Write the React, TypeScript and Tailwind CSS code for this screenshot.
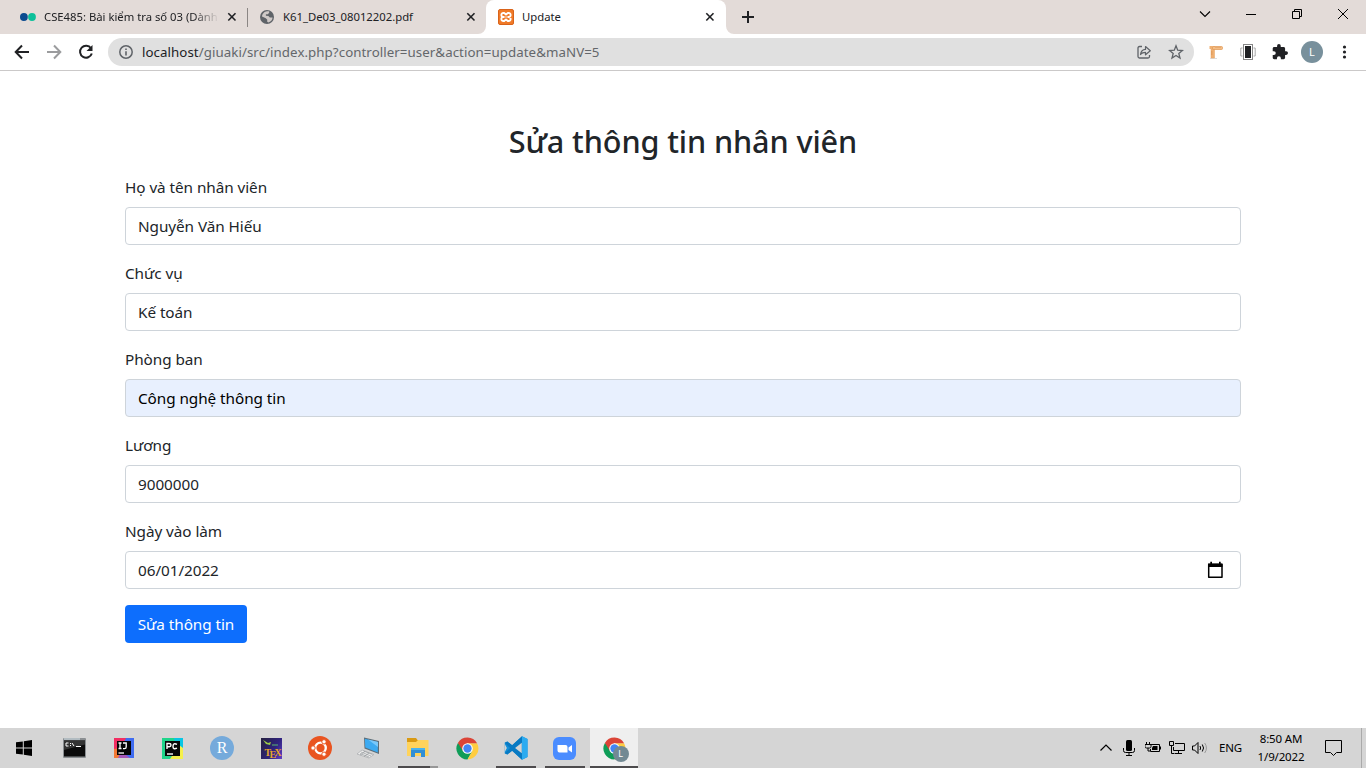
import React from "react";

type P = { children?: React.ReactNode; className?: string };

const Svg = ({ w, h = w, vb, children, className = "" }: { w: number; h?: number; vb?: string } & P) => (
  <svg width={w} height={h} viewBox={vb ?? `0 0 ${w} ${h}`} fill="none" className={`block shrink-0 ${className}`}>
    {children}
  </svg>
);

const TabClose = () => (
  <Svg w={10}>
    <path d="M1.3 1.3l7.2 7.2M8.5 1.3L1.3 8.5" stroke="#202124" strokeWidth="1.6" />
  </Svg>
);

function TabStrip() {
  return (
    <div className="flex h-[34px] bg-[#e3dbd8] text-[11.3px] text-[#202124]">
      <div className="flex w-[247px] items-center pl-5">
        <Svg w={16}>
          <circle cx="3.9" cy="8" r="3.9" fill="#0a4a8f" />
          <circle cx="12" cy="8" r="3.9" fill="#0cc09a" />
        </Svg>
        <span className="ml-2 w-[175px] whitespace-nowrap tracking-[-0.01px] [mask-image:linear-gradient(to_right,black_85%,transparent)]">
          CSE485: Bài kiểm tra số 03 (Dành
        </span>
        <span className="ml-2"><TabClose /></span>
      </div>
      <div className="mt-2 h-[19px] w-px bg-[#8b8684]" />
      <div className="flex w-[238px] items-center pl-3">
        <Svg w={14}>
          <circle cx="7" cy="7" r="7" fill="#5f6368" />
          <path d="M7 1.3h2.2v1.5L7.8 4.2H5.9v1.6l2.5.1 1.4 1.6h2.8c0 2.3-2 4.6-4.3 5l-1.2-1 .2-1.8-1.5-1.5L2 6.4c.2-2.3 2.4-4.9 5-5.1z" fill="#e3dbd8" opacity=".85" />
        </Svg>
        <span className="ml-[9px] w-[183px]">K61_De03_08012202.pdf</span>
        <TabClose />
      </div>
      <div className="relative flex w-[240px] items-center rounded-t-lg bg-white pl-3">
        <Svg w={8} className="absolute bottom-0 -left-2"><path d="M8 0v8H0A8 8 0 0 0 8 0z" fill="#fff" /></Svg>
        <Svg w={8} className="absolute -right-2 bottom-0"><path d="M0 0v8h8A8 8 0 0 1 0 0z" fill="#fff" /></Svg>
        <Svg w={16}>
          <rect x=".5" y=".5" width="15" height="15" rx="1.5" fill="#f07a28" stroke="#d9631a" />
          <path d="M6 8H5Q3.300 7.800 3.300 6T5 4h1.200L8 5.600 9.800 4H11q1.700.2 1.700 2T11 8h-1M6 8H5q-1.700.2-1.700 2T5 12h1.200L8 10.400 9.800 12H11q1.700-.2 1.700-2T11 8M5.500 8h5" stroke="#fff" strokeWidth="1.900" strokeLinejoin="round" />
          <path d="M6.300 8h3.400" stroke="#f07a28" strokeWidth="1.300" />
        </Svg>
        <span className="ml-2 w-[183px]">Update</span>
        <TabClose />
      </div>
      <div className="flex flex-1 items-center pl-4">
        <Svg w={12}><path d="M6 0v12M0 6h12" stroke="#202124" strokeWidth="2" /></Svg>
      </div>
      <div className="flex h-7 text-black">
        <div className="flex w-[46px] items-center justify-center"><Svg w={12}><path d="M1 3.500l5 5 5-5" stroke="currentColor" strokeWidth="1.1" /></Svg></div>
        <div className="flex w-[46px] items-center justify-center"><Svg w={10}><path d="M0 5.500h10" stroke="#000" /></Svg></div>
        <div className="flex w-[46px] items-center justify-center"><Svg w={10}><path d="M.5 2.500h7v7h-7zM2.500 2.500v-2h7v7h-2" stroke="#000" /></Svg></div>
        <div className="flex w-[46px] items-center justify-center"><Svg w={10}><path d="M0 0l10 10M10 0L0 10" stroke="#000" /></Svg></div>
      </div>
    </div>
  );
}

function Toolbar() {
  return (
    <div className="flex h-[37px] items-center border-b border-[#cbc9c9] bg-white pl-[14px]">
      <Svg w={16}><path d="M15 8H2M8 1.500L1.700 8 8 14.500" stroke="#202124" strokeWidth="2" /></Svg>
      <Svg w={16} className="ml-4"><path d="M1 8h13M8 1.500L14.300 8 8 14.500" stroke="#9b9c9e" strokeWidth="2" /></Svg>
      <Svg w={16} className="ml-4">
        <path d="M13 4.300A6 6 0 1 0 13.800 9.500" stroke="#202124" strokeWidth="2" />
        <path d="M14.500 1v6h-6z" fill="#202124" />
      </Svg>
      <div className="ml-[14px] flex h-7 w-[1086px] items-center rounded-full bg-[#e0e0e0] pl-[11px]">
        <Svg w={14}>
          <circle cx="7" cy="7" r="6.200" stroke="#5f6368" strokeWidth="1.500" />
          <path d="M7 6.200v4.300M7 3.500v1.500" stroke="#5f6368" strokeWidth="1.600" />
        </Svg>
        <span className="ml-[9px] flex-1 pt-px text-[13.3px] tracking-[0.06px] text-[#64676b]">
          <span className="text-[#202124]">localhost</span>/giuaki/src/index.php?controller=user&amp;action=update&amp;maNV=5
        </span>
        <Svg w={16} className="mr-4">
          <path d="M6 2.500H3.500Q2 2.500 2 4v8.500Q2 14 3.500 14h8.500q1.500 0 1.500-1.500V11" stroke="#5f6368" strokeWidth="1.300" />
          <path d="M4.500 10.500c.5-3.500 2.300-5 5-5.100V2.500l4.800 4.300-4.800 4V8.300c-2.300 0-3.800.6-5 2.200z" stroke="#5f6368" strokeWidth="1.200" strokeLinejoin="round" />
        </Svg>
        <Svg w={16} className="mr-[10px]">
          <path d="M8 1.800l1.700 4.400 4.700.3-3.600 3 1.200 4.600L8 11.500l-4 2.600 1.200-4.600-3.600-3 4.700-.3z" stroke="#5f6368" strokeWidth="1.300" />
        </Svg>
      </div>
      <Svg w={16} className="ml-[14px]">
        <path d="M2 14.500h7" stroke="#ddd" />
        <path d="M3 2.500h3.500v11.500H3z" fill="#efb071" stroke="#e5a262" strokeWidth=".5" />
        <path d="M1.500 2h3v3h-3z" fill="#f0b173" />
        <rect x="4.500" y="2.500" width="10" height="3" rx="1" fill="#f4bd85" stroke="#df9651" strokeWidth=".7" />
        <path d="M8 3v1M10 3v1M12 3v1M3 8h1.500M3 10h1.500" stroke="#cf803c" strokeWidth=".6" />
      </Svg>
      <Svg w={16} className="ml-4">
        <rect x="3.500" y=".5" width="9" height="15" stroke="#888" />
        <rect x="5" y="2" width="6" height="12" fill="#202124" />
        <path d="M2.500 4H.8v8h1.700M13.500 4h1.700v8h-1.700" stroke="#aaa" />
      </Svg>
      <Svg w={16} vb="1 1 22 22" className="ml-4">
        <path fill="#202124" d="M20.500 11H19V7c0-1.100-.9-2-2-2h-4V3.500a2.500 2.500 0 0 0-5 0V5H4c-1.100 0-2 .9-2 2v3.800h1.500a2.700 2.700 0 0 1 0 5.400H2V20c0 1.100.9 2 2 2h3.800v-1.500a2.700 2.700 0 0 1 5.400 0V22H17c1.100 0 2-.9 2-2v-4h1.500a2.500 2.500 0 0 0 0-5z" />
      </Svg>
      <div className="ml-[13px] flex size-[22px] items-center justify-center rounded-full bg-[#78909c] text-[11px] text-white">L</div>
      <Svg w={16} className="ml-[13px]">
        <circle cx="8.500" cy="3" r="1.600" fill="#202124" /><circle cx="8.500" cy="8" r="1.600" fill="#202124" /><circle cx="8.500" cy="13" r="1.600" fill="#202124" />
      </Svg>
    </div>
  );
}

const fields = [
  { label: "Họ và tên nhân viên", value: "Nguyễn Văn Hiếu" },
  { label: "Chức vụ", value: "Kế toán" },
  { label: "Phòng ban", value: "Công nghệ thông tin", auto: true },
  { label: "Lương", value: "9000000" },
  { label: "Ngày vào làm", value: "06/01/2022", date: true },
];

function Form() {
  return (
    <main className="h-[657px] bg-white px-[125px] pt-[51px] text-[15.3px] tracking-[-0.06px] text-[#212529]">
      <h2 className="mb-[7px] h-[46px] text-center text-[30.6px] leading-[38px] font-medium tracking-[-0.1px]">Sửa thông tin nhân viên</h2>
      {fields.map((f) => (
        <div key={f.label} className="mb-4 h-[70px]">
          <label className="mb-2 block h-6 leading-6">{f.label}</label>
          <div className={`flex h-[38px] items-center rounded border border-[#ced4da] px-3 ${f.auto ? "bg-[#e8f0fe] text-black" : "bg-white"}`}>
            <input className="min-w-0 flex-1 bg-transparent outline-none" defaultValue={f.value} />
            {f.date && (
              <Svg w={16} h={18} className="mr-[5px]">
                <path d="M1.700 3.500h13.300v12.700H1.700z" stroke="#000" strokeWidth="1.500" strokeLinejoin="round" />
                <path d="M1 2.500h14.500V6H1zM3.300.8H5V3H3.300zM12 .8h1.700V3H12z" fill="#000" />
              </Svg>
            )}
          </div>
        </div>
      ))}
      <button className="block h-[38px] w-[122px] rounded bg-[#0d6efd] tracking-[-0.06px] text-white">Sửa thông tin</button>
    </main>
  );
}

const Chrome = () => (
  <Svg w={23} vb="0 0 48 48">
    <path d="M24 24L4 12.500A23 23 0 0 0 24 47l9.500-17z" fill="#0f9d58" />
    <path d="M24 13h20a23 23 0 0 1-20 34l10-18z" fill="#ffcd40" />
    <path d="M24 13h20A23 23 0 0 0 4 12.500L14.500 29z" fill="#db4437" />
    <circle cx="24" cy="24" r="11" fill="#fff" /><circle cx="24" cy="24" r="8.700" fill="#4285f4" />
  </Svg>
);

const apps: { icon: React.ReactNode; state?: "open" | "multi" | "active" }[] = [
  { icon: <Svg w={23} h={20} className="mr-px">
    <rect width="23" height="20" rx="1" fill="#8b8f92" /><path d="M1 2.500h21V18.500H1z" fill="#0b0b0b" /><path d="M1 2.500h21v4L1 12z" fill="#333" />
    <path d="M1 1h16" stroke="#d8e8f0" /><path d="M5.500 5H3v3h2.500M7.500 5v1M7.500 7v1M9 5l2 3M13 8.500h5" stroke="#fff" strokeWidth="1" />
  </Svg> },
  { icon: <Svg w={20}>
    <path d="M0 0h20v20H0z" fill="#3f6cf0" /><path d="M0 0h12l-6 12L0 12z" fill="#f22d62" /><path d="M0 11l6-1 4 10H0z" fill="#f37a35" /><path d="M4 20l3-7 9 7z" fill="#a558b8" />
    <path d="M3 3h14v14H3z" fill="#050505" />
    <path d="M4.500 5h3M6 5v5.500M4.500 10.500h3M9 5h3.200v4q0 1.700-1.700 1.700H9" stroke="#fff" strokeWidth="1.300" /><path d="M4.500 15h5.500" stroke="#fff" strokeWidth="1.300" />
  </Svg> },
  { icon: <Svg w={21} className="mr-px">
    <path d="M0 0h21v21H0z" fill="#20d58b" /><path d="M12 0h9v12l-7-2z" fill="#08c6e4" /><path d="M21 10v11H8l9-14z" fill="#f5f04b" /><path d="M3 3h15v15H3z" fill="#080808" />
    <path d="M5 11V5.500h2.200q1.800 0 1.800 1.600T7.200 8.800H5M15 6.300q-3.800-1.800-4 1.900t4 2" stroke="#fff" strokeWidth="1.400" /><path d="M5 16h6" stroke="#fff" strokeWidth="1.400" />
  </Svg> },
  { icon: <div className="flex size-6 items-center justify-center rounded-full bg-[#75aadb] font-['Liberation_Serif',serif] text-[16px] leading-none text-white">R</div> },
  { icon: <div className="relative h-[21px] w-[21px] bg-[linear-gradient(120deg,#25203f,#2f237e_60%,#6140c4)] font-['Liberation_Serif',serif] text-[10px] leading-none font-bold text-[#e5a52b]">
    <Svg w={21} h={10} className="absolute top-0 left-0"><path d="M2 2l5 3 3-1-1 3-4-1z" fill="#9ccb47" /><path d="M11 7h6" stroke="#59b774" /></Svg>
    <span className="absolute top-[10px] left-1">T</span><span className="absolute top-3 left-[9px]">E</span><span className="absolute top-[10px] left-[14px]">X</span>
  </div> },
  { icon: <Svg w={24}>
    <circle cx="12" cy="12" r="12" fill="#e95420" /><circle cx="12.500" cy="12" r="5.300" stroke="#fff" strokeWidth="2.300" />
    {[[5, 12], [16, 5.8], [16, 18.2]].map(([x, y]) => <circle key={y} cx={x} cy={y} r="2.200" fill="#fff" stroke="#e95420" strokeWidth="1" />)}
  </Svg> },
  { icon: <Svg w={24} className="mr-[2px]">
    <path d="M8 1.500l15 3.500v13L8.500 12.500z" fill="#5c6d78" /><path d="M8.800 2.800l13 3.200v10.400L9.300 11.500z" fill="#3caaf1" /><path d="M12 3.500l10 2.500v5z" fill="#78c8fa" />
    <path d="M6 14l12 4.500-5 3.500L1 18z" fill="#eee" stroke="#a8abad" strokeWidth=".7" /><path d="M5 16l10 4M4 17.500l9 3.500M7.500 15l9 3.500M9 15.500L4 19M13 17l-5 3.500" stroke="#8c9194" strokeWidth=".6" />
  </Svg> },
  { icon: <Svg w={22} h={20}>
    <path d="M0 2V0h9l1.500 2H21v5H0z" fill="#d99a13" /><path d="M0 4h9l2-2h10.500v16H0z" fill="#ffd35b" /><path d="M4 10h14v9h-4v-4H8v4H4z" fill="#318fd5" /><path d="M4 10h14v2H4z" fill="#4ab3ec" />
  </Svg>, state: "multi" },
  { icon: <Chrome /> },
  { icon: <Svg w={24} vb="0 0 100 100">
    <path d="M75 1l23 11v76L75 99 34 61 14 77 3 72V28l11-5 20 16z" fill="#148fd8" />
    <path d="M75 1L34 39 14 23 3 28l22 22L3 72l11 5 20-16 41 38z" fill="#087ac3" /><path d="M75 1l23 11v76L75 99z" fill="#2cabf0" /><path d="M74 28v44L46 50z" fill="#d4d4d4" /><path d="M3 33l9 17-9 17z" fill="#d4d4d4" />
  </Svg>, state: "open" },
  { icon: <Svg w={23} className="mr-px">
    <rect width="23" height="23" rx="6" fill="#4a8cff" /><path d="M4.500 8h8q2 0 2 2v5.500h-8q-2 0-2-2zM15.500 10.500l3.500-2.500v7.500l-3.500-2.500z" fill="#fff" />
  </Svg>, state: "open" },
  { icon: <div className="relative"><Chrome /><div className="absolute top-[9px] left-[10px] flex size-4 items-center justify-center rounded-full bg-[#728993] text-[9px] leading-none text-white">L</div></div>, state: "active" },
];

function Taskbar() {
  return (
    <div className="flex h-10 bg-[#d5d5d5] text-black">
      <div className="flex w-[51px] items-center pl-4">
        <Svg w={16}><path d="M0 2.300L6.800 1.400V7.500H0zM7.800 1.200L16 0v7.500H7.800zM0 8.500h6.800v6.100L0 13.700zM7.800 8.500H16V16l-8.200-1.200z" fill="#000" /></Svg>
      </div>
      <div className="flex gap-px">
        {apps.map((a, i) => (
          <div key={i} className={`flex h-10 w-12 flex-col items-center ${a.state === "active" ? "bg-[#efefef]" : ""}`}>
            <div className="flex h-[38px] items-center pt-[2px]">{a.icon}</div>
            {a.state === "open" && <div className="h-[2px] w-10 bg-[#4d4b4d]" />}
            {a.state === "active" && <div className="h-[2px] w-12 bg-[#4d4b4d]" />}
            {a.state === "multi" && <div className="flex h-[2px] w-10 bg-[#979797]"><div className="w-8 bg-[#4d4b4d]" /></div>}
          </div>
        ))}
      </div>
      <div className="ml-auto flex items-center">
        <Svg w={12} className="mr-[11px]"><path d="M.5 8.500L6 3l5.500 5.500" stroke="#000" strokeWidth="1.200" /></Svg>
        <Svg w={12} h={16} className="mr-[10px]"><rect x="3" width="6" height="11" rx="1.500" fill="#000" /><path d="M.5 8v2.500q0 2 2 2h7q2 0 2-2V8M6 12.500v3M3 15.500h6" stroke="#000" /></Svg>
        <Svg w={16} h={12} className="mr-2"><path d="M6 2.500h8.500v7h-9V7M15.500 4.500v3" stroke="#000" /><path d="M8 4h4.500v4H7V6z" fill="#000" /><path d="M1.500 0v2M4.500 0v2M0 2.500h6v2q0 1.500-1.500 1.500h-3Q0 6 0 4.500zM3 6v3h2" stroke="#000" /></Svg>
        <Svg w={16} h={14} className="mr-[7px]"><path d="M6 2.500h9.500v7H4.500V6M9.500 9.500v3M6 12.500h7M.5.5h4v4h-4zM2.500 4.500v8h3" stroke="#000" /></Svg>
        <Svg w={17} h={14} className="mr-[10px]"><path d="M.5 5h2L6 1.500v11L2.500 9h-2z" stroke="#000" /><path d="M8 5q1.300 2 0 4M10.300 3.500q2.500 3.500 0 7" stroke="#000" /><path d="M12.700 2q3.500 5 0 10" stroke="#999" /></Svg>
        <span className="w-[24px] text-[11.5px] tracking-[-0.15px]">ENG</span>
        <div className="mr-px ml-3 w-[52px] text-center text-[11.5px] leading-[18px] tracking-[-0.15px] whitespace-nowrap"><div>8:50 AM</div><div>1/9/2022</div></div>
        <Svg w={17} h={16} className="ml-[17px]"><path d="M.5.500h16v12h-5l-3 3-3-3h-5z" stroke="#000" /></Svg>
        <div className="ml-[19px] h-10 w-[5px] border-l border-[#aaa]" />
      </div>
    </div>
  );
}

export default function App() {
  return (
    <div className="h-[768px] w-[1366px] overflow-hidden bg-white font-['Noto_Sans',sans-serif]">
      <TabStrip />
      <Toolbar />
      <Form />
      <Taskbar />
    </div>
  );
}
